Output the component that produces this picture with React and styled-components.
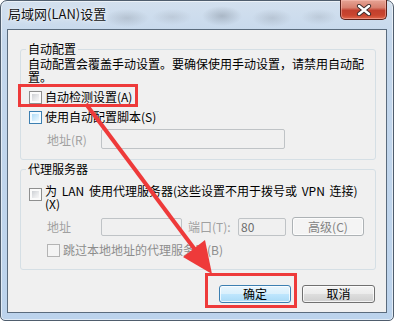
import React from 'react';
import styled, { createGlobalStyle, css } from 'styled-components';

const GlobalStyle = createGlobalStyle`
  html, body { margin: 0; padding: 0; background: #ffffff; }
  body { font-family: "Noto Sans CJK SC", "Noto Sans", sans-serif; }
`;

const Stage = styled.div`
  position: relative;
  width: 394px;
  height: 321px;
  overflow: hidden;
`;

/* ----- Aero window frame ----- */
const Window = styled.div`
  box-sizing: border-box;
  width: 394px;
  height: 321px;
  border: 1px solid #4f5d6d;
  border-radius: 7px 7px 5px 5px;
  padding: 0 6px 7px;
  display: flex;
  flex-direction: column;
  background: linear-gradient(180deg, #d3e0ee 0, #c4d7ec 40px, #bcd3ec 100%);
  box-shadow: inset 0 0 0 1px rgba(255, 255, 255, 0.55);
`;

const TitleBar = styled.div`
  height: 28px;
  flex: none;
  display: flex;
  justify-content: space-between;
  align-items: flex-start;
  background:
    radial-gradient(ellipse 22px 9px at 120px 17px, rgba(120, 128, 138, 0.28), transparent),
    radial-gradient(ellipse 20px 8px at 165px 16px, rgba(130, 136, 146, 0.22), transparent),
    radial-gradient(ellipse 20px 10px at 215px 15px, rgba(95, 104, 116, 0.32), transparent),
    radial-gradient(ellipse 20px 9px at 265px 17px, rgba(120, 128, 138, 0.25), transparent),
    radial-gradient(ellipse 18px 8px at 312px 16px, rgba(120, 128, 138, 0.2), transparent);
`;

const Title = styled.span`
  margin-left: 1px;
  padding-top: 5px;
  font-size: 13px;
  line-height: 16px;
  color: #111;
  text-shadow: 0 0 6px rgba(255, 255, 255, 0.95), 0 0 2px rgba(255, 255, 255, 0.9);
`;

const CloseButton = styled.div`
  box-sizing: border-box;
  width: 47px;
  height: 20px;
  margin-top: -1px;
  display: flex;
  align-items: center;
  justify-content: center;
  border: 1px solid #5b2019;
  border-top: none;
  border-radius: 0 0 5px 5px;
  background: linear-gradient(180deg, #e6a495 0%, #d8806f 40%, #c2402e 55%, #c9452f 80%, #e0674c 100%);
  box-shadow: inset 0 0 0 1px rgba(255, 200, 190, 0.45);
`;

/* ----- client area ----- */
const Client = styled.div`
  flex: 1;
  box-sizing: border-box;
  border: 1px solid #5a6b7d;
  background: #f0f0f0;
  padding: 0 10px 0 12px;
  display: flex;
  flex-direction: column;
  font-size: 12px;
  color: #000;
`;

const Group = styled.fieldset`
  margin: ${p => p.$first ? '11px' : '1px'} 0 0;
  padding: 0 7px ${p => p.$first ? '10px' : '9px'};
  min-width: 0;
  border: 1px solid #d5dfe5;
  border-radius: 3px;
`;

const Legend = styled.legend`
  padding: 0 2px;
  margin-left: -2px;
  font-size: 12px;
  line-height: 16px;
`;

const Description = styled.div`
  line-height: 13px;
  white-space: nowrap;
`;

const CheckRow = styled.div`
  display: flex;
  align-items: ${p => p.$multi ? 'flex-start' : 'center'};
  gap: 3px;
  min-height: 20px;
  margin-top: ${p => p.$top || 0}px;
  padding-left: ${p => p.$indent || 1}px;
  color: ${p => p.$disabled ? '#8d8d8d' : '#000'};
`;

const checkColors = {
  normal: css`
    border-color: #8e8f8f;
    background: linear-gradient(135deg, #cdd0d4 0%, #e9eaec 60%, #f7f7f7 100%) content-box, #fbfbfb;
  `,
  hot: css`
    border-color: #3c7fb1;
    background: linear-gradient(135deg, #b0dcf7 0%, #d6eefc 60%, #eef8fe 100%) content-box, #f4fbff;
  `,
  disabled: css`
    border-color: #b4b4b4;
    background: #f4f4f4;
  `,
};

const CheckBox = styled.span`
  flex: none;
  box-sizing: border-box;
  width: 13px;
  height: 13px;
  padding: 2px;
  border: 1px solid;
  margin-top: ${p => p.$multi ? '3px' : '0'};
  ${p => checkColors[p.$variant || 'normal']}
`;

const CheckLabel = styled.span`
  line-height: ${p => p.$multi ? '12.5px' : '14px'};
  word-spacing: ${p => p.$multi ? '2px' : '0'};
  white-space: nowrap;
`;

const FieldRow = styled.div`
  display: flex;
  align-items: center;
  height: ${p => p.$height}px;
  margin-top: ${p => p.$top}px;
  padding-left: 19px;
`;

const FieldLabel = styled.span`
  width: ${p => p.$width}px;
  margin-left: ${p => p.$gap || 0}px;
  flex: none;
  color: #a0a0a0;
`;

const TextBox = styled.div`
  box-sizing: border-box;
  width: ${p => p.$width}px;
  height: ${p => p.$height}px;
  flex: none;
  border: 1px solid #bfc3c6;
  border-radius: 2px;
  background: #f0f0f0;
  padding-left: 2px;
  display: flex;
  align-items: center;
  color: #6d6d6d;
  line-height: 14px;
`;

const ButtonBar = styled.div`
  display: flex;
  justify-content: flex-end;
  gap: 11px;
  margin: 15px 1px 0 0;
`;

const buttonKinds = {
  normal: css`
    border-color: #707070;
    background: linear-gradient(180deg, #f4f4f4 0%, #ebebeb 48%, #dddddd 52%, #cfcfcf 100%);
    color: #000;
  `,
  default: css`
    border-color: #3c7fb1;
    background: linear-gradient(180deg, #e8f5fd 0%, #d9f0fc 48%, #bee6fd 52%, #a9daf6 100%);
    color: #000;
  `,
  disabled: css`
    border-color: #adb2b5;
    background: #f4f4f4;
    color: #838383;
  `,
};

const Button = styled.div`
  box-sizing: border-box;
  width: ${p => p.$width}px;
  height: ${p => p.$height || 18}px;
  margin-left: ${p => p.$gap || 0}px;
  flex: none;
  display: flex;
  align-items: center;
  justify-content: center;
  border: 1px solid;
  border-radius: 3px;
  box-shadow: inset 0 0 0 1px rgba(255, 255, 255, 0.75);
  font-size: 12px;
  line-height: 14px;
  ${p => buttonKinds[p.$kind || 'normal']}
`;

const Overlay = styled.svg`
  position: absolute;
  left: 0;
  top: 0;
  pointer-events: none;
`;

const CloseGlyph = () => (
  <svg width="16" height="12" viewBox="0 0 16 12">
    <path d="M3 2 L13 10 M13 2 L3 10" stroke="#3a2a2a" strokeWidth="4.2" strokeLinecap="round" />
    <path d="M3 2 L13 10 M13 2 L3 10" stroke="#ffffff" strokeWidth="2.4" strokeLinecap="round" />
  </svg>
);

const Annotations = () => (
  <Overlay width="394" height="321" viewBox="0 0 394 321">
    <rect x="19.5" y="85.5" width="117" height="20" fill="none" stroke="#ee3a3a" strokeWidth="3" />
    <rect x="206.5" y="274.5" width="89" height="32" fill="none" stroke="#ee3a3a" strokeWidth="3" />
    <line x1="86" y1="104" x2="196" y2="251" stroke="#ee3a3a" strokeWidth="4" />
    <polygon points="212,274 183,257 205,240" fill="#ee3a3a" />
  </Overlay>
);

export default function App() {
  return (
    <Stage>
      <GlobalStyle />
      <Window>
        <TitleBar>
          <Title>局域网(LAN)设置</Title>
          <CloseButton><CloseGlyph /></CloseButton>
        </TitleBar>

        <Client>
          <Group $first>
            <Legend>自动配置</Legend>
            <Description>
              自动配置会覆盖手动设置。要确保使用手动设置，请禁用自动配
              <br />
              置。
            </Description>
            <CheckRow $top={4}>
              <CheckBox />
              <CheckLabel>自动检测设置(A)</CheckLabel>
            </CheckRow>
            <CheckRow>
              <CheckBox $variant="hot" />
              <CheckLabel>使用自动配置脚本(S)</CheckLabel>
            </CheckRow>
            <FieldRow $top={2} $height={20}>
              <FieldLabel $width={54}>地址(R)</FieldLabel>
              <TextBox $width={184} $height={20} />
            </FieldRow>
          </Group>

          <Group>
            <Legend>代理服务器</Legend>
            <CheckRow $top={8} $multi>
              <CheckBox $multi />
              <CheckLabel $multi>
                为 LAN 使用代理服务器(这些设置不用于拨号或 VPN 连接)
                <br />
                (X)
              </CheckLabel>
            </CheckRow>
            <FieldRow $top={7} $height={19}>
              <FieldLabel $width={54}>地址</FieldLabel>
              <TextBox $width={81} $height={18} />
              <FieldLabel $width={50} $gap={6}>端口(T):</FieldLabel>
              <TextBox $width={48} $height={18}>80</TextBox>
              <Button $kind="disabled" $width={72} $height={19} $gap={6}>高级(C)</Button>
            </FieldRow>
            <CheckRow $top={4} $indent={19} $disabled>
              <CheckBox $variant="disabled" />
              <CheckLabel>跳过本地地址的代理服务器(B)</CheckLabel>
            </CheckRow>
          </Group>

          <ButtonBar>
            <Button $kind="default" $width={72}>确定</Button>
            <Button $width={73}>取消</Button>
          </ButtonBar>
        </Client>
      </Window>
      <Annotations />
    </Stage>
  );
}
